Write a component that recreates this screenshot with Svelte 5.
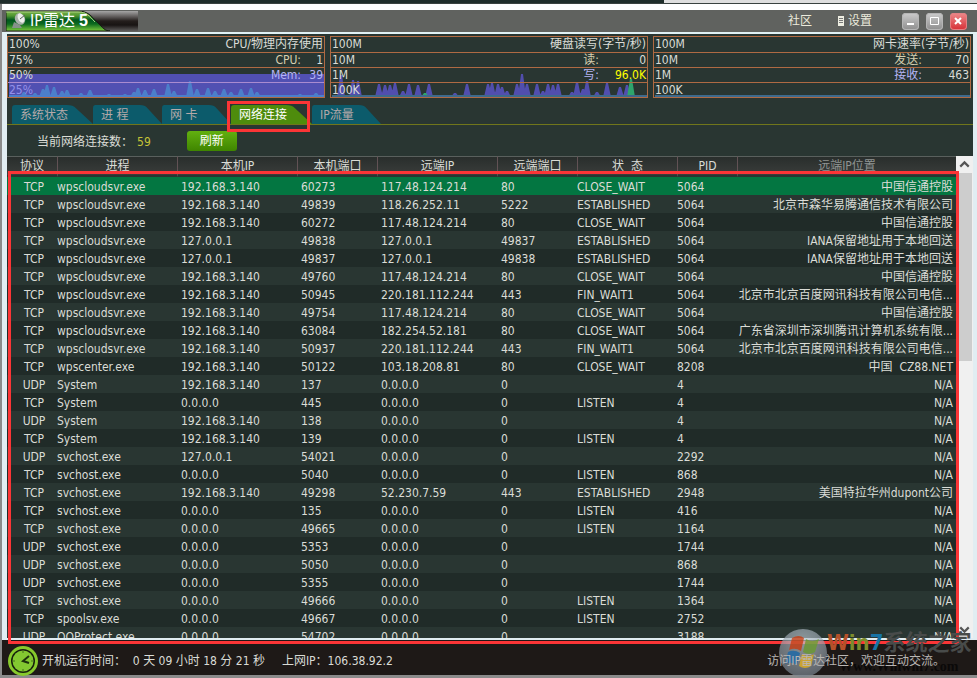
<script>
  const tabs = ['系统状态', '进 程', '网 卡', '网络连接', 'IP流量'];
  let activeTab = '网络连接';
  let selected = 0;

  const columns = [
    { key: 'proto', label: '协议' },
    { key: 'process', label: '进程' },
    { key: 'localIp', label: '本机IP' },
    { key: 'localPort', label: '本机端口' },
    { key: 'remoteIp', label: '远端IP' },
    { key: 'remotePort', label: '远端端口' },
    { key: 'state', label: '状  态' },
    { key: 'pid', label: 'PID' },
    { key: 'location', label: '远端IP位置' }
  ];

  const rows = [
    ['TCP', 'wpscloudsvr.exe', '192.168.3.140', '60273', '117.48.124.214', '80', 'CLOSE_WAIT', '5064', '中国信通控股'],
    ['TCP', 'wpscloudsvr.exe', '192.168.3.140', '49839', '118.26.252.11', '5222', 'ESTABLISHED', '5064', '北京市森华易腾通信技术有限公司'],
    ['TCP', 'wpscloudsvr.exe', '192.168.3.140', '60272', '117.48.124.214', '80', 'CLOSE_WAIT', '5064', '中国信通控股'],
    ['TCP', 'wpscloudsvr.exe', '127.0.0.1', '49838', '127.0.0.1', '49837', 'ESTABLISHED', '5064', 'IANA保留地址用于本地回送'],
    ['TCP', 'wpscloudsvr.exe', '127.0.0.1', '49837', '127.0.0.1', '49838', 'ESTABLISHED', '5064', 'IANA保留地址用于本地回送'],
    ['TCP', 'wpscloudsvr.exe', '192.168.3.140', '49760', '117.48.124.214', '80', 'CLOSE_WAIT', '5064', '中国信通控股'],
    ['TCP', 'wpscloudsvr.exe', '192.168.3.140', '50945', '220.181.112.244', '443', 'FIN_WAIT1', '5064', '北京市北京百度网讯科技有限公司电信...'],
    ['TCP', 'wpscloudsvr.exe', '192.168.3.140', '49754', '117.48.124.214', '80', 'CLOSE_WAIT', '5064', '中国信通控股'],
    ['TCP', 'wpscloudsvr.exe', '192.168.3.140', '63084', '182.254.52.181', '80', 'CLOSE_WAIT', '5064', '广东省深圳市深圳腾讯计算机系统有限...'],
    ['TCP', 'wpscloudsvr.exe', '192.168.3.140', '50937', '220.181.112.244', '443', 'FIN_WAIT1', '5064', '北京市北京百度网讯科技有限公司电信...'],
    ['TCP', 'wpscenter.exe', '192.168.3.140', '50122', '103.18.208.81', '80', 'CLOSE_WAIT', '8208', '中国  CZ88.NET'],
    ['UDP', 'System', '192.168.3.140', '137', '0.0.0.0', '0', '', '4', 'N/A'],
    ['TCP', 'System', '0.0.0.0', '445', '0.0.0.0', '0', 'LISTEN', '4', 'N/A'],
    ['UDP', 'System', '192.168.3.140', '138', '0.0.0.0', '0', '', '4', 'N/A'],
    ['TCP', 'System', '192.168.3.140', '139', '0.0.0.0', '0', 'LISTEN', '4', 'N/A'],
    ['UDP', 'svchost.exe', '127.0.0.1', '54021', '0.0.0.0', '0', '', '2292', 'N/A'],
    ['TCP', 'svchost.exe', '0.0.0.0', '5040', '0.0.0.0', '0', 'LISTEN', '868', 'N/A'],
    ['TCP', 'svchost.exe', '192.168.3.140', '49298', '52.230.7.59', '443', 'ESTABLISHED', '2948', '美国特拉华州dupont公司'],
    ['TCP', 'svchost.exe', '0.0.0.0', '135', '0.0.0.0', '0', 'LISTEN', '416', 'N/A'],
    ['TCP', 'svchost.exe', '0.0.0.0', '49665', '0.0.0.0', '0', 'LISTEN', '1164', 'N/A'],
    ['UDP', 'svchost.exe', '0.0.0.0', '5353', '0.0.0.0', '0', '', '1744', 'N/A'],
    ['UDP', 'svchost.exe', '0.0.0.0', '5050', '0.0.0.0', '0', '', '868', 'N/A'],
    ['UDP', 'svchost.exe', '0.0.0.0', '5355', '0.0.0.0', '0', '', '1744', 'N/A'],
    ['TCP', 'svchost.exe', '0.0.0.0', '49666', '0.0.0.0', '0', 'LISTEN', '1364', 'N/A'],
    ['TCP', 'spoolsv.exe', '0.0.0.0', '49667', '0.0.0.0', '0', 'LISTEN', '2752', 'N/A'],
    ['UDP', 'QQProtect.exe', '0.0.0.0', '54702', '0.0.0.0', '0', '', '3188', 'N/A']
  ];

  const monitors = [
    {
      title: 'CPU/物理内存使用',
      scale: ['100%', '75%', '50%', '25%'],
      first: ['CPU:', '1'],
      second: ['Mem:', '39'],
      kind: 'cpu'
    },
    {
      title: '硬盘读写(字节/秒)',
      scale: ['100M', '10M', '1M', '100K'],
      first: ['读:', '0'],
      second: ['写:', '96.0K'],
      kind: 'disk'
    },
    {
      title: '网卡速率(字节/秒)',
      scale: ['100M', '10M', '1M', '100K'],
      first: ['发送:', '70'],
      second: ['接收:', '463'],
      kind: 'net'
    }
  ];

  // [x, height] of each peak
  const cpuPeaks = [[16, 5], [27, 4], [35, 8], [39, 12], [46, 10], [54, 6], [59, 7], [73, 4], [82, 7], [101, 3], [117, 3], [126, 5], [130, 9], [137, 7], [146, 8], [160, 13], [166, 6], [182, 16], [189, 8], [200, 9], [207, 6], [216, 8], [223, 5], [233, 8], [243, 9], [249, 5], [292, 3], [308, 4]];
  const diskPeaks = [[10, 22], [22, 17], [27, 16], [48, 13], [54, 12], [59, 12], [64, 14], [72, 6], [78, 13], [87, 12], [98, 13], [124, 4], [136, 13], [157, 13], [161, 14], [167, 13], [171, 10], [176, 6], [186, 13], [191, 23], [196, 13], [206, 13], [212, 6], [217, 13], [222, 12], [227, 13], [241, 5], [246, 15], [252, 8], [256, 16], [266, 5], [276, 14], [289, 10], [296, 12]];

  function peakPath(peaks) {
    return peaks.map(([x, h]) => `M${x - 4} 60L${x - 1} ${60 - h}h2L${x + 4} 60z`).join('');
  }
</script>

<div class="desktop">
  <div class="window">
    <header class="titlebar">
      <h1 class="logo">
        <svg class="logo-back" viewBox="0 0 132 20" preserveAspectRatio="none" aria-hidden="true">
          <defs>
            <linearGradient id="metal" x2="0" y2="1">
              <stop offset="0" stop-color="#a5a5a5" />
              <stop offset=".3" stop-color="#5a5655" />
              <stop offset=".5" stop-color="#241e1c" />
              <stop offset=".7" stop-color="#181413" />
              <stop offset="1" stop-color="#5d5c5b" />
            </linearGradient>
            <linearGradient id="leaf" x2="0" y2="1">
              <stop offset="0" stop-color="#7cb648" />
              <stop offset=".25" stop-color="#4c9430" />
              <stop offset=".45" stop-color="#00571d" />
              <stop offset=".65" stop-color="#0d6a1f" />
              <stop offset="1" stop-color="#7dcb3c" />
            </linearGradient>
          </defs>
          <path fill="url(#metal)" d="M0 0h132v20H0z" />
          <path fill="url(#leaf)" stroke="#151b12" d="M0 0h72c10 0 13 5 19 11s8 9 13 9H0z" />
          <path fill="none" stroke="#a9cf83" d="M0 1h72c9 0 11 4 17 10" />
        </svg>
        <svg class="dish" viewBox="0 0 16 16" aria-hidden="true">
          <ellipse cx="9" cy="6" rx="5" ry="6" fill="#a9b1ab" transform="rotate(-25 9 6)" />
          <ellipse cx="10" cy="5" rx="3" ry="5" fill="#eceeeb" transform="rotate(-25 10 5)" />
          <path fill="#85918a" d="M3 9l6 3 2 3H1z" />
          <path stroke="#566159" d="M9 6l5-4" />
        </svg>
        <span>IP雷达</span><span class="five">5</span>
      </h1>
      <nav class="title-links">
        <a href="#community">社区</a>
        <a href="#settings">
          <svg class="list-icon" viewBox="0 0 6 10" aria-hidden="true">
            <path fill="#eeeee2" d="M0 0h6v10H0z" />
            <path stroke="#777" d="M1 2.500h4M1 4.500h4M1 6.500h4" />
          </svg>设置
        </a>
      </nav>
      <div class="window-buttons">
        <button aria-label="最小化"><svg viewBox="0 0 16 16"><path fill="#fff" d="M5 10h7v2H5z" /></svg></button>
        <button aria-label="最大化"><svg viewBox="0 0 16 16"><path fill="none" stroke="#fff" d="M4.500 4.500h8v7h-8z" /></svg></button>
        <button class="close" aria-label="关闭"><svg viewBox="0 0 16 16"><path stroke="#fff" stroke-width="2" d="M5 5l6 6M11 5l-6 6" /></svg></button>
      </div>
    </header>

    <main>
      <section class="monitors">
        {#each monitors as m}
          <div class="monitor {m.kind}">
            <svg class="graph" viewBox="0 0 316 60" preserveAspectRatio="none" aria-hidden="true">
              {#if m.kind === 'cpu'}
                <path fill="#5b58d2" fill-opacity=".8" d="M1 37h315v23H1z" />
                <path fill="#4b8bd0" fill-opacity=".8" d={peakPath(cpuPeaks)} />
                <path fill="#4b7fcc" d="M1 58h315v2H1z" />
              {:else}
                {#if m.kind === 'disk'}
                  <path fill="#5852c4" fill-opacity=".85" d={peakPath(diskPeaks)} />
                  <path fill="#2ea56c" d={peakPath([[94, 4], [300, 18]])} />
                {/if}
                <path fill="#3e6a8c" d="M1 58h315v2H1z" />
              {/if}
            </svg>
            <div class="line"><span>{m.scale[0]}</span><span>{m.title}</span></div>
            <div class="line"><span>{m.scale[1]}</span><span class="first">{m.first[0]}</span><span class="value">{m.first[1]}</span></div>
            <div class="line"><span>{m.scale[2]}</span><span class="second">{m.second[0]}</span><span class="value last">{m.second[1]}</span></div>
            <div class="line"><span class="low">{m.scale[3]}</span></div>
          </div>
        {/each}
      </section>

      <nav class="tabs">
        {#each tabs as tab}
          <button class="tab" class:active={tab === activeTab} on:click={() => (activeTab = tab)}>
            <svg viewBox="0 0 81 18" preserveAspectRatio="none" aria-hidden="true">
              <path d="M0 18V3q0-3 3-3h52q6 0 9 3l17 15z" />
            </svg>
            <span>{tab}</span>
          </button>
        {/each}
      </nav>

      <div class="toolbar">
        <span>当前网络连接数：</span>
        <span class="count">59</span>
        <button class="refresh">刷新</button>
      </div>

      <div class="list">
        <div class="table-wrap">
          <table>
            <thead>
              <tr>
                {#each columns as col}
                  <th class={col.key}>{col.label}</th>
                {/each}
              </tr>
            </thead>
            <tbody>
              {#each rows as row, i}
                <tr class:selected={i === selected} on:click={() => (selected = i)}>
                  {#each row as cell, c}
                    <td class={columns[c].key}>{cell}</td>
                  {/each}
                </tr>
              {/each}
            </tbody>
          </table>
        </div>
        <div class="scrollbar">
          <button aria-label="向上"><svg viewBox="0 0 16 16"><path d="M4 10l4-4 4 4" /></svg></button>
          <div class="track"><div class="thumb"></div></div>
          <button aria-label="向下"><svg viewBox="0 0 16 16"><path d="M4 6l4 4 4-4" /></svg></button>
        </div>
        <div class="frame"></div>
      </div>
    </main>

    <footer>
      <svg class="clock" viewBox="0 0 30 30" aria-hidden="true">
        <circle cx="15" cy="15" r="13.500" fill="#17200d" stroke="#87ca2c" stroke-width="3" />
        <circle cx="15" cy="15" r="10.500" fill="#83c831" />
        <path fill="none" stroke="#1d310c" stroke-width="2" d="M21 10l-6 5 6 2" />
        <path stroke="#42731b" d="M15 5v2M15 23v2M5 15h2M23 15h2" />
      </svg>
      <span class="uptime">开机运行时间：&nbsp;&nbsp;0 天 09 小时 18 分 21 秒</span>
      <span>上网IP：106.38.92.2</span>
      <a class="visit" href="#community">访问IP雷达社区，欢迎互动交流。</a>
    </footer>

    <div class="watermark">
      <svg viewBox="0 0 48 48" aria-hidden="true">
        <defs>
          <radialGradient id="orb" cx=".5" cy=".3" r=".75">
            <stop offset="0" stop-color="#c3ced6" />
            <stop offset="1" stop-color="#75818c" />
          </radialGradient>
        </defs>
        <circle cx="24" cy="24" r="24" fill="url(#orb)" fill-opacity=".75" />
        <path fill="#c9502c" d="M13 9q7-4 12 0l-3 13q-6-4-12-1z" />
        <path fill="#76a345" d="M27 10q6 4 13 0l-4 13q-6 4-12 0z" />
        <path fill="#2f76b0" d="M9 23q6-3 12 1l-3 12q-6-4-12-1z" />
        <path fill="#dcb336" d="M23 25q6 4 12 0l-3 12q-6 4-12 0z" />
      </svg>
      <div class="brand">
        <div class="name"><b class="orange">W</b><b class="olive">in</b><b class="blue">7</b><b class="cn">系统之家</b></div>
        <div class="site">Www.Winwin7.com</div>
      </div>
    </div>
  </div>
</div>

<style>
  :global(body) {
    margin: 0;
  }

  .desktop {
    box-sizing: border-box;
    height: 100vh;
    padding: 4px 0 3px 2px;
    background:
      linear-gradient(90deg, #1f2d2a 68%, #dedede 68%) top / 100% 3px no-repeat,
      linear-gradient(#39423f 4px, #8b8b8b 4px);
    color: #dadcd6;
    font: 12px/18px "DejaVu Sans Condensed", "Noto Sans CJK SC", sans-serif;
  }

  .window {
    position: relative;
    display: flex;
    flex-direction: column;
    height: 100%;
    background: #e1edf2;
  }

  button {
    padding: 0;
    border: 0;
    font: inherit;
    color: inherit;
    cursor: pointer;
  }

  a {
    color: inherit;
    text-decoration: none;
  }

  .titlebar {
    display: flex;
    align-items: center;
    height: 22px;
    border-top: 6px solid #fff;
    border-bottom: 2px solid #e1f1f4;
    background: #60625f;
  }

  .logo {
    position: relative;
    display: flex;
    align-items: center;
    box-sizing: border-box;
    width: 132px;
    height: 20px;
    margin: 0 auto 0 4px;
    padding-left: 5px;
    font-size: 16px;
    font-weight: normal;
    color: #fff;
  }

  .logo > * {
    position: relative;
  }

  .logo .logo-back {
    position: absolute;
    left: 0;
    width: 132px;
    height: 20px;
  }

  .dish {
    width: 16px;
    height: 16px;
    margin-right: 3px;
  }

  .five {
    margin-left: 4px;
    font-family: "Liberation Sans", sans-serif;
    font-weight: bold;
  }

  .title-links {
    display: flex;
    gap: 26px;
    margin-right: 30px;
    color: #ecebdc;
  }

  .title-links a {
    display: flex;
    align-items: center;
    gap: 4px;
  }

  .list-icon {
    width: 6px;
    height: 10px;
  }

  .window-buttons {
    display: flex;
    gap: 7px;
    margin-right: 10px;
  }

  .window-buttons button {
    width: 17px;
    height: 17px;
    border-radius: 4px;
    background: linear-gradient(#ccc, #8e8e8e);
    box-shadow: inset 0 0 0 1px #b5b5b5;
  }

  .window-buttons .close {
    background: linear-gradient(#ee8a8b, #d62e35);
    box-shadow: inset 0 0 0 1px #e38184;
  }

  .window-buttons svg {
    display: block;
    width: 16px;
    height: 16px;
  }

  main {
    display: flex;
    flex: 1;
    flex-direction: column;
    min-height: 0;
    margin: 0 4px 2px 5px;
    background: #293632;
  }

  .monitors {
    display: grid;
    grid-template-columns: repeat(3, 1fr);
    gap: 5px;
    padding: 2px 2px 0 0;
  }

  .monitor {
    position: relative;
    border: 1px solid #af6a43;
  }

  .line {
    position: relative;
    display: flex;
    justify-content: space-between;
    box-sizing: border-box;
    height: 15px;
    padding: 0 1px;
    line-height: 15px;
    white-space: nowrap;
  }

  .line + .line {
    border-top: 1px solid #af6a43;
  }

  .line .first,
  .line .second {
    margin-left: auto;
    color: #d5cfb0;
  }

  .line .second {
    color: #b6b5f4;
  }

  .value {
    width: 47px;
    text-align: right;
  }

  .cpu .value {
    width: 22px;
  }

  .cpu .last {
    color: #b6b5f4;
  }

  .disk .last {
    color: #ff0;
  }

  .cpu .low {
    color: #9490ea;
  }

  .cpu .line:last-child {
    border-top-color: #a98bd0;
  }

  .graph {
    position: absolute;
    inset: 0;
    width: 100%;
    height: 60px;
  }

  .tabs {
    display: flex;
    height: 19px;
    padding: 7px 0 0 5px;
    border-bottom: 1px solid #70761b;
  }

  .tab {
    position: relative;
    min-width: 69px;
    height: 19px;
    padding: 2px 16px 0 8px;
    background: none;
    color: #b5a9a9;
    line-height: 17px;
    text-align: left;
  }

  .tab:first-child,
  .tab:nth-child(4) {
    width: 81px;
  }

  .tab svg {
    position: absolute;
    left: 0;
    top: 0;
    width: 100%;
    height: 19px;
    fill: #0c5b6b;
  }

  .tab span {
    position: relative;
  }

  .tab.active {
    z-index: 1;
    color: #fff;
  }

  .tab.active::after {
    content: "";
    position: absolute;
    inset: -4px 2px -8px -4px;
    border: 3px solid #fb3536;
  }

  .tab.active svg {
    fill: #4e8c0c;
  }

  .toolbar {
    display: flex;
    align-items: center;
    height: 31px;
    padding-left: 30px;
  }

  .toolbar span {
    padding-top: 2px;
  }

  .count {
    margin: 0 36px 0 4px;
    color: #c5c437;
  }

  .refresh {
    width: 50px;
    height: 20px;
    border-radius: 3px;
    background: linear-gradient(#62b010, #3f8500);
    color: #fff;
  }

  .list {
    position: relative;
    z-index: 1;
    display: flex;
    flex: 1;
    min-height: 0;
  }

  .table-wrap {
    flex: 1;
    overflow: hidden;
  }

  table {
    width: 100%;
    border-collapse: separate;
    border-spacing: 0;
    table-layout: fixed;
  }

  th {
    box-sizing: border-box;
    height: 21px;
    padding: 0;
    border-top: 1px solid #59605d;
    border-bottom: 2px solid #293632;
    background: linear-gradient(#292e2c, #3a3d3b);
    font-weight: normal;
    line-height: 18px;
    white-space: pre;
  }

  th + th {
    border-left: 1px solid #625255;
  }

  td {
    padding: 2px 0 0;
    overflow: hidden;
    line-height: 16px;
    white-space: pre;
  }

  tbody tr {
    background: #293632;
  }

  tbody tr:nth-child(odd) {
    background: #202b28;
  }

  tbody tr.selected {
    background: #037641;
  }

  .proto {
    width: 50px;
  }

  td.proto {
    padding-left: 4px;
    text-align: center;
  }

  .process,
  .localIp,
  .remoteIp {
    width: 120px;
  }

  .localPort,
  .remotePort {
    width: 80px;
  }

  .state {
    width: 100px;
  }

  .pid {
    width: 60px;
  }

  td.localIp,
  td.localPort,
  td.remoteIp,
  td.remotePort {
    padding-left: 4px;
  }

  td.location {
    padding-right: 3px;
    text-align: right;
  }

  th.location {
    color: #8f9492;
  }

  .scrollbar {
    display: flex;
    flex-direction: column;
    width: 17px;
    background: #f0f0f0;
  }

  .scrollbar button {
    height: 17px;
    background: none;
  }

  .scrollbar svg {
    display: block;
    width: 17px;
    height: 17px;
    fill: none;
    stroke: #555;
    stroke-width: 2;
  }

  .track {
    flex: 1;
  }

  .thumb {
    height: 42%;
    margin-right: 1px;
    background: #cdcdcd;
  }

  /* highlight around the connection rows */
  .frame {
    position: absolute;
    inset: 15px 14px -6px 1px;
    border: 3px solid #fb3536;
    pointer-events: none;
  }

  footer {
    display: flex;
    align-items: center;
    height: 29px;
    padding-top: 6px;
    background: #1e1917;
  }

  .clock {
    width: 30px;
    height: 30px;
    margin: 0 4px 0 6px;
  }

  .uptime {
    margin-right: 17px;
  }

  .visit {
    position: relative;
    z-index: 3;
    margin: 0 32px 0 auto;
    color: #b9b6b4;
  }

  .watermark {
    position: absolute;
    z-index: 2;
    right: 4px;
    bottom: -2px;
    display: flex;
    pointer-events: none;
  }

  .watermark svg {
    width: 48px;
    height: 48px;
    opacity: 0.9;
  }

  .brand {
    width: 146px;
    white-space: nowrap;
  }

  .name {
    display: flex;
    align-items: center;
    height: 28px;
    font-size: 22px;
    line-height: 28px;
  }

  .orange {
    color: #b4512a;
  }

  .olive {
    color: #7c8c2c;
  }

  .blue {
    color: #1673a5;
  }

  .cn {
    color: #484b4a;
  }

  .site {
    padding-left: 12px;
    color: #0b0909;
    font: bold 14px/20px "Liberation Serif", serif;
  }
</style>
